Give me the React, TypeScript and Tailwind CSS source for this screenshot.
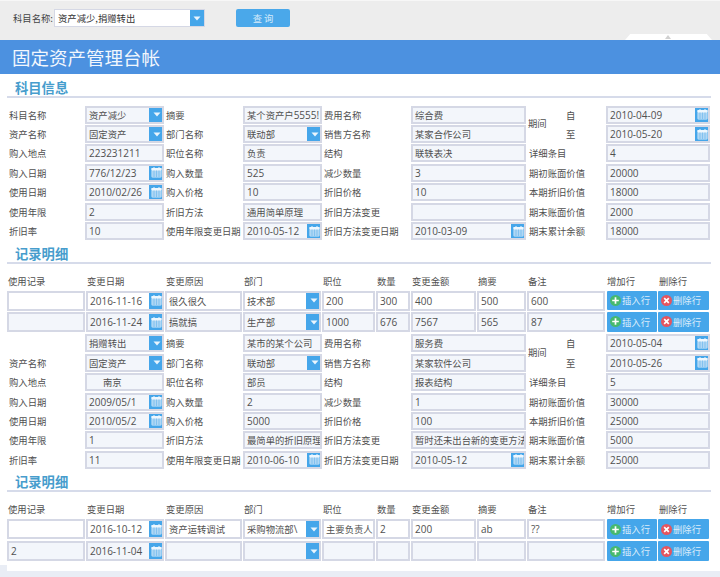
const cjk = '[font-family:"Noto_Sans_CJK_SC","Liberation_Sans",sans-serif]';

type FieldKind = 'text' | 'select' | 'date';

function CalendarIcon() {
  return (
    <svg width="11" height="11" viewBox="0 0 11 11">
      <rect x="0.5" y="1" width="10" height="9.5" rx="1" fill="#d4e9f9" />
      <rect x="0.5" y="1" width="10" height="2" fill="#eef7fe" />
      <path d="M3 0v2M8 0v2" stroke="#eef7fe" strokeWidth="1" />
      <path d="M1 5h9M1 7h9M1 9h9M3 3.5v6.5M5.5 3.5v6.5M8 3.5v6.5" stroke="#6fb8ec" strokeWidth="0.7" />
    </svg>
  );
}

function CaretIcon() {
  return (
    <svg width="8" height="5" viewBox="0 0 8 5">
      <path d="M0.5 0.5h7L4 4.5z" fill="#eaf5fd" />
    </svg>
  );
}

function Field({
  value = '',
  kind = 'text',
  white = false,
  indent = false,
  tall = false,
}: {
  value?: string;
  kind?: FieldKind;
  white?: boolean;
  indent?: boolean;
  tall?: boolean;
}) {
  // latin runs are drawn a little larger than the cjk ones
  const parts = value.split(/([\x00-\x7f]+)/).filter(Boolean);
  return (
    <div
      className={`flex w-full items-stretch overflow-hidden border-2 border-[#d5d8e5] ${tall ? 'h-[20px]' : 'h-[18px]'} ${white ? 'bg-white' : 'bg-[#f3f6fb]'}`}
    >
      <div
        className={`min-w-0 flex-1 overflow-hidden whitespace-nowrap text-[9.33px] text-[#505050] ${tall ? 'leading-[16px]' : 'leading-[14px]'} ${indent ? 'pl-[16px]' : 'pl-[2px]'}`}
      >
        {parts.map((p, i) =>
          /^[\x00-\x7f]+$/.test(p) ? (
            <span key={i} className="text-[10px] [font-family:'Open_Sans',sans-serif]">
              {p}
            </span>
          ) : (
            <span key={i}>{p}</span>
          ),
        )}
      </div>
      {kind === 'select' && (
        <div className="-my-[2px] -mr-[2px] flex w-[15px] shrink-0 items-center justify-center bg-[#45a6ea]">
          <CaretIcon />
        </div>
      )}
      {kind === 'date' && (
        <div className="-my-[2px] -mr-[2px] flex w-[15px] shrink-0 items-center justify-center bg-[#45a6ea]">
          <CalendarIcon />
        </div>
      )}
    </div>
  );
}

function Label({ text }: { text: string }) {
  return <div className="whitespace-nowrap pl-px text-[9.33px] text-[#505050]">{text}</div>;
}

function SectionTitle({ text, h }: { text: string; h: string }) {
  return (
    <div className={`ml-[7px] mr-[9px] flex items-end border-b-2 border-[#d6dbea] pb-[1px] pl-2 ${h}`}>
      <span className="text-[13.3px] font-bold leading-[14px] text-[#479dcd]">{text}</span>
    </div>
  );
}

interface Cell {
  value: string;
  kind?: FieldKind;
  indent?: boolean;
}
interface FormData {
  rows: [string, Cell, string, Cell, string, Cell, string, Cell][];
}

function FormGrid({ data, top }: { data: FormData; top: string }) {
  return (
    <div
      className={`ml-2 grid w-[702px] grid-cols-[77px_80px_78px_80px_88px_116px_79px_104px] auto-rows-[19.4px] items-center ${top}`}
    >
      {data.rows.map((r, i) => (
        <div key={i} className="contents">
          <Label text={r[0]} />
          <div className="pr-px">
            <Field {...r[1]} />
          </div>
          <Label text={r[2]} />
          <div className="pr-px">
            <Field {...r[3]} />
          </div>
          <Label text={r[4]} />
          <div className="pr-px">
            <Field {...r[5]} />
          </div>
          {i === 0 ? (
            <div className="row-span-2 flex h-full items-center pl-px text-[9.33px] text-[#505050]">
              <span className="w-[38px] -translate-y-px">期间</span>
              <div className="flex h-full flex-col justify-around">
                <span>自</span>
                <span>至</span>
              </div>
            </div>
          ) : i > 1 ? (
            <div className="pl-px">
              <Label text={r[6]} />
            </div>
          ) : null}
          <Field {...r[7]} />
        </div>
      ))}
    </div>
  );
}

function ActionButton({ kind }: { kind: 'add' | 'del' }) {
  return (
    <div className="flex h-[19.5px] items-center gap-[1px] rounded-[1px] bg-[#45a6ea] pl-[3px] text-[9.33px] text-[#dcedfa]">
      <svg width="11" height="11" viewBox="0 0 11 11" className="shrink-0">
        {kind === 'add' ? (
          <>
            <circle cx="5.5" cy="5.5" r="5.5" fill="#47b96f" />
            <path d="M5.5 2.2v6.6M2.2 5.5h6.6" stroke="#fff" strokeWidth="1.7" />
          </>
        ) : (
          <>
            <circle cx="5.5" cy="5.5" r="5.5" fill="#e5555f" />
            <path d="M3.2 3.2l4.6 4.6M7.8 3.2l-4.6 4.6" stroke="#fff" strokeWidth="1.7" />
          </>
        )}
      </svg>
      {kind === 'add' ? '插入行' : '删除行'}
    </div>
  );
}

const headers = ['使用记录', '变更日期', '变更原因', '部门', '职位', '数量', '变更金额', '摘要', '备注', '增加行', '删除行'];

function DetailTable({
  rows,
  headH,
  rowH,
}: {
  rows: { white: boolean; values: string[] }[];
  headH: string;
  rowH: string;
}) {
  return (
    <div className="ml-[7px] w-[704px]">
      <div className={`grid grid-cols-[79px_79px_78px_79px_54px_35px_66px_50px_79px_52px_52px] items-end ${headH}`}>
        {headers.map((h) => (
          <div key={h} className="pb-[3px] pl-[1px] text-[9.33px] text-[#505050]">
            {h}
          </div>
        ))}
      </div>
      {rows.map((row, i) => (
        <div
          key={i}
          className={`grid grid-cols-[79px_79px_78px_79px_54px_35px_66px_50px_79px_52px_52px] items-start ${rowH}`}
        >
          {row.values.map((v, j) => (
            <div key={j} className="pr-px">
              <Field value={v} white={row.white} tall kind={j === 1 ? 'date' : j === 3 ? 'select' : 'text'} />
            </div>
          ))}
          <div className="pl-px pr-px">
            <ActionButton kind="add" />
          </div>
          <div className="pr-px">
            <ActionButton kind="del" />
          </div>
        </div>
      ))}
    </div>
  );
}

const form1: FormData = {
  rows: [
    ['科目名称', { value: '资产减少', kind: 'select' }, '摘要', { value: '某个资产户5555!' }, '费用名称', { value: '综合费' }, '', { value: '2010-04-09', kind: 'date' }],
    ['资产名称', { value: '固定资产', kind: 'select' }, '部门名称', { value: '联动部', kind: 'select' }, '销售方名称', { value: '某家合作公司' }, '', { value: '2010-05-20', kind: 'date' }],
    ['购入地点', { value: '223231211' }, '职位名称', { value: '负责' }, '结构', { value: '联轶表决' }, '详细条目', { value: '4' }],
    ['购入日期', { value: '776/12/23', kind: 'date' }, '购入数量', { value: '525' }, '减少数量', { value: '3' }, '期初账面价值', { value: '20000' }],
    ['使用日期', { value: '2010/02/26', kind: 'date' }, '购入价格', { value: '10' }, '折旧价格', { value: '10' }, '本期折旧价值', { value: '18000' }],
    ['使用年限', { value: '2' }, '折旧方法', { value: '通用简单原理' }, '折旧方法变更', { value: '' }, '期末账面价值', { value: '2000' }],
    ['折旧率', { value: '10' }, '使用年限变更日期', { value: '2010-05-12', kind: 'date' }, '折旧方法变更日期', { value: '2010-03-09', kind: 'date' }, '期末累计余额', { value: '18000' }],
  ],
};

const form2: FormData = {
  rows: [
    ['', { value: '捐赠转出', kind: 'select' }, '摘要', { value: '某市的某个公司' }, '费用名称', { value: '服务费' }, '', { value: '2010-05-04', kind: 'date' }],
    ['资产名称', { value: '固定资产', kind: 'select' }, '部门名称', { value: '联动部', kind: 'select' }, '销售方名称', { value: '某家软件公司' }, '', { value: '2010-05-26', kind: 'date' }],
    ['购入地点', { value: '南京', indent: true }, '职位名称', { value: '部员' }, '结构', { value: '报表结构' }, '详细条目', { value: '5' }],
    ['购入日期', { value: '2009/05/1', kind: 'date' }, '购入数量', { value: '2' }, '减少数量', { value: '1' }, '期初账面价值', { value: '30000' }],
    ['使用日期', { value: '2010/05/2', kind: 'date' }, '购入价格', { value: '5000' }, '折旧价格', { value: '100' }, '本期折旧价值', { value: '25000' }],
    ['使用年限', { value: '1' }, '折旧方法', { value: '最简单的折旧原理' }, '折旧方法变更', { value: '暂时还未出台新的变更方法' }, '期末账面价值', { value: '5000' }],
    ['折旧率', { value: '11' }, '使用年限变更日期', { value: '2010-06-10', kind: 'date' }, '折旧方法变更日期', { value: '2010-05-12', kind: 'date' }, '期末累计余额', { value: '25000' }],
  ],
};

export default function App() {
  return (
    <div className={`relative flex h-[577px] w-[720px] flex-col overflow-hidden bg-white ${cjk}`}>
      {/* query bar */}
      <div className="relative flex h-10 shrink-0 items-start border-t border-[#f7f7f7] bg-[#ededed] pl-[13px] pt-2 text-[9.33px] text-[#444]">
        <span className="w-[41px] leading-[18px]">科目名称:</span>
        <div className="flex h-[18px] w-[151px] items-stretch border border-[#d5d8e5] bg-white">
          <div className="flex-1 pl-[3px] leading-[16px] text-[#333]">资产减少,捐赠转出</div>
          <div className="flex w-[14px] items-center justify-center bg-[#45a6ea]">
            <CaretIcon />
          </div>
        </div>
        <div className="ml-[31px] flex h-[18px] w-[54px] items-center justify-center rounded-[2px] bg-[#4aa8ea] text-[#d6ebfa]">
          查 询
        </div>
        <div className="absolute bottom-0 left-[625px] h-[6px] w-[87px] bg-white [clip-path:polygon(6%_0,94%_0,100%_100%,0_100%)]">
          <div className="absolute left-[40px] top-[1px] h-0 w-0 border-x-[3px] border-b-[4px] border-x-transparent border-b-[#d0d0d0]" />
        </div>
      </div>

      <div className="flex h-[34px] shrink-0 items-center bg-[#4c91e0] pl-3 text-[18.5px] leading-none text-[#f2f7fd]">
        固定资产管理台帐
      </div>

      <SectionTitle text="科目信息" h="h-[24px]" />
      <FormGrid data={form1} top="mt-[7px]" />

      <SectionTitle text="记录明细" h="h-[23px]" />
      <DetailTable
        headH="h-[27px]"
        rowH="h-[21.5px]"
        rows={[
          { white: true, values: ['', '2016-11-16', '很久很久', '技术部', '200', '300', '400', '500', '600'] },
          { white: false, values: ['', '2016-11-24', '搞就搞', '生产部', '1000', '676', '7567', '565', '87'] },
        ]}
      />
      <FormGrid data={form2} top="" />

      <SectionTitle text="记录明细" h="h-[23px]" />
      <DetailTable
        headH="h-[27px]"
        rowH="h-[22px]"
        rows={[
          { white: true, values: ['', '2016-10-12', '资产运转调试', '采购物流部\\', '主要负责人', '2', '200', 'ab', '??'] },
          { white: false, values: ['2', '2016-11-04', '', '', '', '', '', '', ''] },
        ]}
      />

      <div className="absolute bottom-0 left-0 h-[6px] w-full bg-[#e9edf5]" />
      <div className="absolute bottom-0 left-0 h-3 w-[7px] bg-[#e9edf5]" />
    </div>
  );
}
